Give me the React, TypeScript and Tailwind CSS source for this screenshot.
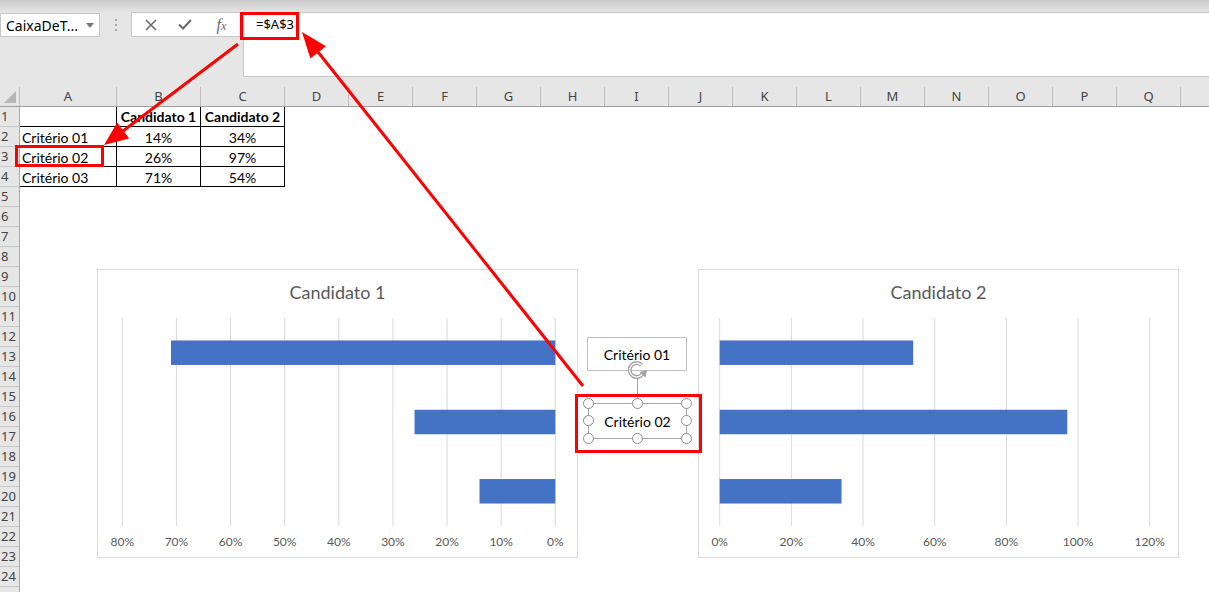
const COLUMNS = [
  { label: "A", w: "w-[97px]" },
  { label: "B", w: "w-[84px]" },
  { label: "C", w: "w-[84px]" },
  ...["D", "E", "F", "G", "H", "I", "J", "K", "L", "M", "N", "O", "P", "Q"].map((label) => ({ label, w: "w-[64px]" })),
];

const TABLE = [
  { name: "Critério 01", c1: "14%", c2: "34%" },
  { name: "Critério 02", c1: "26%", c2: "97%" },
  { name: "Critério 03", c1: "71%", c2: "54%" },
];

const BAR = "#4472c4";
const BAND_CENTERS = [34.7, 104, 173.3];

function FormulaBar() {
  return (
    <div className="flex h-[65px] bg-[#e6e6e6]">
      <div className="flex h-[25px] w-[243px] items-start">
        <div className="mt-px flex h-[24px] w-[100px] items-center justify-between border border-[#c6c6c6] bg-white pl-[5px] pr-[5px] text-[14px] text-black">
          <span>CaixaDeT...</span>
          <svg width="8" height="5" viewBox="0 0 8 5">
            <path d="M0 0 L8 0 L4 5 Z" fill="#7a7a7a" />
          </svg>
        </div>
        <div className="flex h-[25px] w-[31px] flex-col items-center justify-center gap-[3px]">
          <span className="h-[2px] w-[2px] bg-[#a8a8a8]" />
          <span className="h-[2px] w-[2px] bg-[#a8a8a8]" />
          <span className="h-[2px] w-[2px] bg-[#a8a8a8]" />
        </div>
        <div className="flex h-[25px] w-[112px] items-center border border-[#c6c6c6] bg-white">
          <span className="flex w-[38px] justify-center">
            <svg width="12" height="12" viewBox="0 0 12 12">
              <path d="M1 1 L11 11 M11 1 L1 11" stroke="#6b6b6b" strokeWidth="1.6" />
            </svg>
          </span>
          <span className="flex w-[32px] justify-center">
            <svg width="14" height="11" viewBox="0 0 14 11">
              <path d="M1 5.5 L5 9.5 L13 1" stroke="#6b6b6b" strokeWidth="2" fill="none" />
            </svg>
          </span>
          <span className="flex w-[42px] items-baseline justify-center font-['Liberation_Serif',serif] text-[16px] italic text-[#6b6b6b]">
            f<span className="text-[12px]">x</span>
          </span>
        </div>
      </div>
      <div className="h-[65px] flex-1 border border-r-0 border-[#c6c6c6] bg-white pl-[12px] pt-[2px] text-[13px] text-black">
        =$A$3
      </div>
    </div>
  );
}

function ColumnHeaders() {
  return (
    <div className="flex h-[20px] border-b border-[#9f9f9f] bg-[#e6e6e6] text-[13px] text-[#444]">
      <div className="relative w-[20px] border-r border-[#bdbdbd]">
        <svg className="absolute left-[4px] top-[4px]" width="12" height="12" viewBox="0 0 12 12">
          <path d="M12 0 L12 12 L0 12 Z" fill="#b6b6b6" />
        </svg>
      </div>
      {COLUMNS.map((c) => (
        <div key={c.label} className={`flex items-center justify-center border-r border-[#bdbdbd] ${c.w}`}>
          {c.label}
        </div>
      ))}
      <div className="flex-1" />
    </div>
  );
}

function RowHeaders() {
  return (
    <div className="flex w-[20px] flex-col border-r border-[#ababab] bg-[#e6e6e6] text-[13px] text-[#444]">
      {Array.from({ length: 25 }, (_, i) => (
        <div key={i} className="h-[20px] shrink-0 border-b border-[#c8c8c8] pl-[1px] leading-[19px]">
          {i < 24 ? i + 1 : ""}
        </div>
      ))}
    </div>
  );
}

function DataTable() {
  return (
    <div className="flex flex-col font-['Lato',sans-serif] text-[14px] text-black">
      <div className="flex h-[20px] items-center">
        <div className="h-full w-[97px] border-r border-b border-black" />
        <div className="flex h-full w-[84px] items-center justify-center border-r border-b border-black font-bold">Candidato 1</div>
        <div className="flex h-full w-[84px] items-center justify-center border-r border-b border-black font-bold">Candidato 2</div>
      </div>
      {TABLE.map((r) => (
        <div key={r.name} className="flex h-[20px]">
          <div className="flex h-full w-[97px] items-center border-r border-b border-black pl-[2px] pt-px">{r.name}</div>
          <div className="flex h-full w-[84px] items-center justify-center border-r border-b border-black pt-px">{r.c1}</div>
          <div className="flex h-full w-[84px] items-center justify-center border-r border-b border-black pt-px">{r.c2}</div>
        </div>
      ))}
    </div>
  );
}

type ChartProps = {
  title: string;
  labels: string[];
  x0: number;
  step: number;
  bars: { x: number; w: number }[];
};

function Chart({ title, labels, x0, step, bars }: ChartProps) {
  return (
    <div className="flex h-[289px] w-[481px] flex-col border border-[#d9d9d9] bg-white">
      <div className="h-[48px] pt-[10px] text-center font-['Lato',sans-serif] text-[18px] leading-[24px] text-[#595959]">
        {title}
      </div>
      <svg width="479" height="238" className="font-['Lato',sans-serif]">
        {labels.map((l, i) => {
          const x = x0 + i * step;
          return (
            <g key={l}>
              <line x1={x} x2={x} y1={0} y2={208} stroke="#d9d9d9" strokeWidth="1" />
              <text x={x} y={223} textAnchor="middle" dominantBaseline="central" fontSize="12" fill="#595959">
                {l}
              </text>
            </g>
          );
        })}
        {bars.map((b, i) => (
          <rect key={i} x={b.x} y={BAND_CENTERS[i] - 12.25} width={b.w} height={24.5} fill={BAR} />
        ))}
      </svg>
    </div>
  );
}

function Handle({ className }: { className: string }) {
  return <span className={`absolute h-[11px] w-[11px] rounded-full border-[1.5px] border-[#8c8c8c] bg-white ${className}`} />;
}

function TextBoxes() {
  return (
    <div className="relative flex w-[120px] flex-col font-['Lato',sans-serif] text-[14px] text-black">
      <div className="ml-[9px] mt-[68px] flex h-[34px] w-[100px] items-center justify-center border border-[#bfbfbf] bg-white">
        Critério 01
      </div>
      <svg className="absolute left-[50px] top-[92px]" width="20" height="19" viewBox="0 0 20 19">
        <path d="M13.5 4 A7 7 0 1 0 15 12" stroke="#a3a3a3" strokeWidth="4" fill="none" />
        <path d="M13.5 4 A7 7 0 1 0 15 12" stroke="#ffffff" strokeWidth="1.3" fill="none" />
        <path d="M11.5 11 L19 9 L17.5 16.5 Z" fill="#a3a3a3" />
      </svg>
      <span className="absolute left-[59px] top-[110px] h-[23px] w-px bg-[#a6a6a6]" />
      <div className="relative ml-[10px] mt-[32px] flex h-[36px] w-[99px] items-center justify-center border border-[#a6a6a6]">
        Critério 02
        <Handle className="left-[-6px] top-[-6px]" />
        <Handle className="left-[43px] top-[-6px]" />
        <Handle className="right-[-6px] top-[-6px]" />
        <Handle className="left-[-6px] top-[11px]" />
        <Handle className="right-[-6px] top-[11px]" />
        <Handle className="bottom-[-6px] left-[-6px]" />
        <Handle className="bottom-[-6px] left-[43px]" />
        <Handle className="bottom-[-6px] right-[-6px]" />
      </div>
    </div>
  );
}

function Annotations() {
  const red = "#ff0000";
  return (
    <svg className="pointer-events-none absolute left-0 top-0" width="1209" height="592">
      <rect x="241.5" y="13.5" width="56" height="25" fill="none" stroke={red} strokeWidth="3" />
      <rect x="16.5" y="146.5" width="86" height="19" fill="none" stroke={red} strokeWidth="3" />
      <rect x="576.5" y="395.5" width="124" height="56" fill="none" stroke={red} strokeWidth="3" />
      <line x1="238" y1="44" x2="123" y2="131" stroke={red} strokeWidth="3" />
      <path d="M104 145 L129.2 138.6 L117.2 122.6 Z" fill={red} />
      <line x1="583" y1="386" x2="318" y2="52" stroke={red} strokeWidth="3" />
      <path d="M302 32 L326 46.2 L310.4 58.6 Z" fill={red} />
    </svg>
  );
}

export default function App() {
  const c1Step = 433 / 8;
  const c1Zero = 24.3 + 433;
  const c2Step = 430 / 6;
  const c2Zero = 20.7;
  const c1Bars = [71, 26, 14].map((v) => ({ x: c1Zero - v * (c1Step / 10), w: v * (c1Step / 10) }));
  const c2Bars = [54, 97, 34].map((v) => ({ x: c2Zero, w: v * (c2Step / 20) }));
  return (
    <div className="relative flex h-[592px] w-[1209px] flex-col overflow-hidden bg-white font-['Noto_Sans',sans-serif]">
      <div className="h-[12px] shrink-0 bg-linear-to-b from-[#cbcbcb] to-[#e4e4e4]" />
      <FormulaBar />
      <div className="h-[10px] shrink-0 bg-[#e6e6e6]" />
      <ColumnHeaders />
      <div className="flex min-h-0 flex-1">
        <RowHeaders />
        <div className="flex flex-1 flex-col">
          <DataTable />
          <div className="mt-[82px] flex pl-[77px]">
            <Chart
              title="Candidato 1"
              labels={["80%", "70%", "60%", "50%", "40%", "30%", "20%", "10%", "0%"]}
              x0={24.3}
              step={c1Step}
              bars={c1Bars}
            />
            <TextBoxes />
            <Chart
              title="Candidato 2"
              labels={["0%", "20%", "40%", "60%", "80%", "100%", "120%"]}
              x0={c2Zero}
              step={c2Step}
              bars={c2Bars}
            />
          </div>
        </div>
      </div>
      <Annotations />
    </div>
  );
}
